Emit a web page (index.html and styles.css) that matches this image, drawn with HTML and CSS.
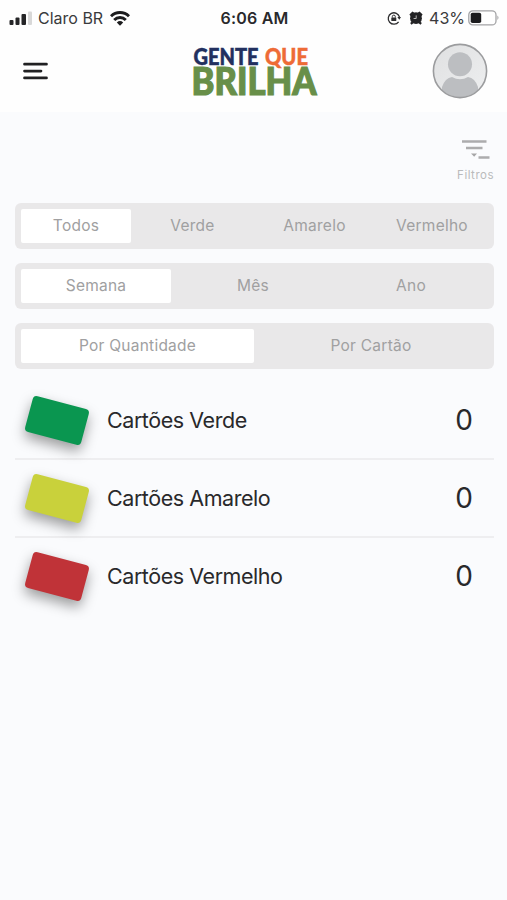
FILE: index.html
```html
<!DOCTYPE html>
<html lang="pt-BR">
<head>
    <meta charset="UTF-8">
    <meta name="viewport" content="width=device-width, initial-scale=1.0">
    <title>Gente que Brilha</title>
    <link rel="stylesheet" href="styles.css">
</head>
<body>
    <header class="header">
        <div class="status-bar">
            <div class="status-left">
                <svg class="signal" width="23" height="14" viewBox="0 0 23 14">
                    <rect x="0.5" y="9" width="4" height="5" rx="1" fill="#252527"/>
                    <rect x="6.5" y="6.5" width="4" height="7.5" rx="1" fill="#252527"/>
                    <rect x="12.5" y="3" width="4.5" height="11" rx="1" fill="#252527"/>
                    <rect x="19" y="0.5" width="4" height="13.5" rx="1" fill="#d8d8d8"/>
                </svg>
                <span class="carrier">Claro BR</span>
                <svg class="wifi" width="20" height="15" viewBox="0 0 20 15">
                    <g fill="none" stroke="#1c1c1e" stroke-width="2.9">
                        <path d="M1 5.2 C6 0.2 14 0.2 19 5.2"/>
                        <path d="M4.2 8.9 C7.4 5.6 12.6 5.6 15.8 8.9"/>
                    </g>
                    <path d="M6.8 11.4 Q10 8.8 13.2 11.4 L10 14.8 Z" fill="#1c1c1e"/>
                </svg>
            </div>
            <span class="clock">6:06 AM</span>
            <div class="status-right">
                <svg class="rotation" width="14" height="14" viewBox="0 0 14 14">
                    <path d="M11.6 10.8 A5.7 5.7 0 1 1 12.5 6.2" fill="none" stroke="#2e2e30" stroke-width="1.3"/>
                    <path d="M10.4 6 L14 6 L12.3 8.8 Z" fill="#2e2e30"/>
                    <rect x="4.3" y="6.4" width="5" height="3.7" rx="0.6" fill="#2e2e30"/>
                    <path d="M5.3 6.6 V5.6 a1.5 1.5 0 0 1 3 0 V6.6" fill="none" stroke="#2e2e30" stroke-width="1"/>
                </svg>
                <svg class="alarm" width="14" height="14" viewBox="0 0 14 14">
                    <circle cx="7" cy="7.2" r="5.9" fill="#222224"/>
                    <path d="M0.4 3.4 L3.4 0.4 L5.4 1.8 L1.8 5.4 Z M13.6 3.4 L10.6 0.4 L8.6 1.8 L12.2 5.4 Z M1.1 12 L3 10.4 L4.6 12 L2.6 13.7 Z M12.9 12 L11 10.4 L9.4 12 L11.4 13.7 Z" fill="#222224"/>
                    <path d="M7.2 4.4 V7.5 H4.6" fill="none" stroke="#c5c5c5" stroke-width="0.9"/>
                </svg>
                <span class="percent">43%</span>
                <svg class="battery" width="32" height="16" viewBox="0 0 32 16">
                    <rect x="0.8" y="0.9" width="27.2" height="14" rx="4" fill="#fff" stroke="#a3a3a5" stroke-width="1.3"/>
                    <rect x="2.7" y="2.8" width="10.5" height="10.2" rx="1.8" fill="#1c1c1e"/>
                    <path d="M29.4 5.6 Q31.6 7.8 29.4 10 Z" fill="#a3a3a5"/>
                </svg>
            </div>
        </div>

        <div class="top-bar">
            <button class="menu-button" aria-label="Menu">
                <svg width="26" height="18" viewBox="0 0 26 18">
                    <path d="M1.5 2.2 H23.5 M1.5 9.1 H18 M1.5 15.9 H23.5" stroke="#202022" stroke-width="2.7" stroke-linecap="round"/>
                </svg>
            </button>
            <svg class="logo" width="128" height="66" viewBox="0 0 128 66">
                <text class="logo-gente" x="1.5" y="26.5" textLength="65" lengthAdjust="spacingAndGlyphs">GENTE</text>
                <text class="logo-que" x="73" y="26.5" textLength="43" lengthAdjust="spacingAndGlyphs">QUE</text>
                <text class="logo-brilha" x="-0.5" y="57" textLength="125" lengthAdjust="spacingAndGlyphs">BRILHA</text>
            </svg>
            <svg class="avatar" width="56" height="56" viewBox="0 0 56 56">
                <defs>
                    <linearGradient id="avatarBg" x1="0" y1="0" x2="1" y2="1">
                        <stop offset="0" stop-color="#dfe0e1"/>
                        <stop offset="1" stop-color="#eeeff0"/>
                    </linearGradient>
                    <clipPath id="avatarClip"><circle cx="28" cy="28" r="26"/></clipPath>
                </defs>
                <circle cx="28" cy="28" r="26.5" fill="url(#avatarBg)"/>
                <g clip-path="url(#avatarClip)" fill="#bcbec1">
                    <circle cx="28" cy="21.3" r="12"/>
                    <path d="M10 56 V44 Q13 35 20 34 Q28 38.5 36 34 Q43 35 46 44 V56 Z"/>
                </g>
                <circle cx="28" cy="28" r="26.6" fill="none" stroke="#9b9c9e" stroke-width="1.6"/>
            </svg>
        </div>
    </header>

    <main class="content">
        <button class="filter-button">
            <svg width="30" height="22" viewBox="0 0 30 22">
                <path d="M1 3.4 H25.5 M5 10 H21.5 M17.5 19.4 H28.5" stroke="#acacad" stroke-width="2.5"/>
                <path d="M10 15.4 H16 L13.2 18.8 Z" fill="#a5a5a6"/>
            </svg>
            <span>Filtros</span>
        </button>

        <div class="segments">
            <div class="segment segment-color">
                <button class="tab active">Todos</button>
                <button class="tab">Verde</button>
                <button class="tab">Amarelo</button>
                <button class="tab">Vermelho</button>
            </div>
            <div class="segment segment-period">
                <button class="tab active">Semana</button>
                <button class="tab">Mês</button>
                <button class="tab">Ano</button>
            </div>
            <div class="segment segment-group">
                <button class="tab active">Por Quantidade</button>
                <button class="tab">Por Cartão</button>
            </div>
        </div>

        <ul class="card-list">
            <li>
                <span class="card green"></span>
                <span class="card-name">Cartões Verde</span>
                <span class="card-count">0</span>
            </li>
            <li>
                <span class="card yellow"></span>
                <span class="card-name">Cartões Amarelo</span>
                <span class="card-count">0</span>
            </li>
            <li>
                <span class="card red"></span>
                <span class="card-name">Cartões Vermelho</span>
                <span class="card-count">0</span>
            </li>
        </ul>
    </main>
</body>
</html>
```
FILE: styles.css
```css
* {
    box-sizing: border-box;
}

body {
    margin: 0;
    min-height: 100vh;
    background-color: #fafbfd;
    color: #29292b;
    font-family: 'Inter', 'Liberation Sans', sans-serif;
}

button {
    border: none;
    padding: 0;
    background: none;
    font-family: inherit;
    cursor: pointer;
}

svg {
    display: block;
    flex-shrink: 0;
}

.header {
    height: 112px;
    background-color: #fefefe;
}

/* status bar */
.status-bar {
    display: grid;
    grid-template-columns: 1fr auto 1fr;
    align-items: center;
    height: 36px;
    padding: 0 7px 0 9px;
    font-size: 16px;
    line-height: 20px;
}

.status-left,
.status-right {
    display: flex;
    align-items: center;
}

.status-right {
    justify-content: flex-end;
}

.carrier {
    margin: 0 7px 0 6px;
    color: #3a3a3c;
}

.clock {
    font-weight: 600;
    letter-spacing: 0.2px;
}

.alarm {
    margin: 0 6px 0 8px;
}

.percent {
    margin-right: 3px;
    color: #3a3a3c;
}

/* menu, logo, avatar */
.top-bar {
    display: grid;
    grid-template-columns: 1fr auto 1fr;
    align-items: center;
    height: 70px;
    padding: 0 19px 0 23px;
}

.menu-button {
    justify-self: start;
}

.avatar {
    justify-self: end;
}

.logo {
    overflow: visible;
    font-family: 'Lato', 'Liberation Sans', sans-serif;
    font-weight: 900;
}

.logo-gente,
.logo-que {
    font-size: 22px;
    stroke-width: 0.5;
}

.logo-gente {
    fill: #22305f;
    stroke: #22305f;
}

.logo-que {
    fill: #ee6b36;
    stroke: #ee6b36;
}

.logo-brilha {
    font-size: 37px;
    fill: #688f49;
    stroke: #688f49;
    stroke-width: 1.2;
}

.content {
    display: flex;
    flex-direction: column;
    padding: 26px 13px 0 15px;
}

.filter-button {
    display: flex;
    flex-direction: column;
    align-items: center;
    align-self: flex-end;
    gap: 7px;
    color: #b9babb;
    font-size: 11.5px;
    line-height: 16px;
    letter-spacing: 0.5px;
}

/* segmented controls */
.segments {
    display: flex;
    flex-direction: column;
    gap: 14px;
    width: 479px;
    margin-top: 19.5px;
}

.segment {
    display: grid;
    height: 46px;
    padding: 6px;
    border-radius: 6px;
    background-color: #e9e8e9;
}

.segment-color {
    grid-template-columns: 110px 123px 121px 114px;
}

.segment-period {
    grid-template-columns: 150px 164px 152px;
}

.segment-group {
    grid-template-columns: 233px 234px;
}

.tab {
    padding-bottom: 1px;
    color: #a0a0a1;
    font-size: 15.5px;
    letter-spacing: 0.25px;
}

.tab.active {
    border-radius: 2px;
    background-color: #fff;
}

/* card list */
.card-list {
    width: 479px;
    margin: 13.5px 0 0;
    padding: 0;
    list-style: none;
}

.card-list li {
    display: flex;
    align-items: center;
    height: 78px;
    padding: 0 21px 0 13px;
    border-bottom: 2px solid #eeeef0;
}

.card-list li:last-child {
    border-bottom-color: transparent;
}

.card {
    width: 58px;
    height: 37px;
    border-radius: 4px;
    transform: rotate(15deg);
    box-shadow: 1px 6px 13px rgba(0, 0, 0, 0.38);
}

.green {
    background-color: #0a9650;
}

.yellow {
    background-color: #c9d13b;
}

.red {
    background-color: #c03338;
}

.card-name {
    margin-left: 21px;
    font-size: 21.5px;
    letter-spacing: -0.45px;
}

.card-count {
    margin-left: auto;
    font-size: 28px;
}
```
